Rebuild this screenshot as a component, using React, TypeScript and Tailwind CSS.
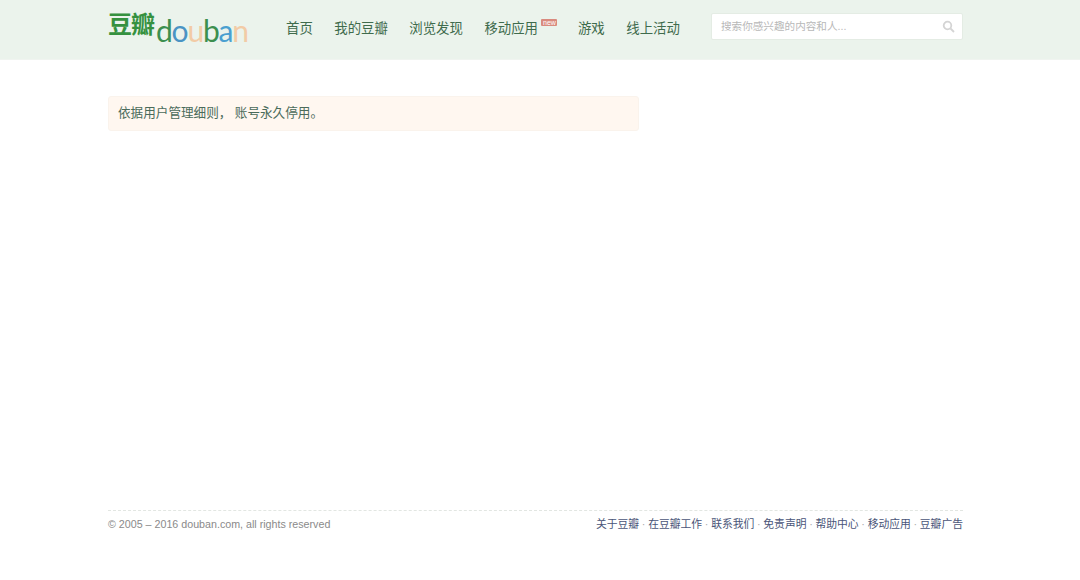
import React from "react";

const cjk = "font-['Liberation_Sans','Noto_Sans_CJK_SC',sans-serif]";

const navItems = ["首页", "我的豆瓣", "浏览发现", "移动应用", "游戏", "线上活动"];
const footerLinks = ["关于豆瓣", "在豆瓣工作", "联系我们", "免责声明", "帮助中心", "移动应用", "豆瓣广告"];

const App: React.FC = () => {
  return (
    <div className={`h-[580px] w-[1080px] overflow-hidden bg-white flex flex-col ${cjk}`}>
      <header className="h-[60px] shrink-0 bg-[#ebf3ec] border-b border-[#f0f4f0] flex pl-[108px] pr-[117px]">
        <div className="w-[178px] shrink-0 flex items-start relative">
          <span className="text-[24px] leading-[24px] font-bold text-[#35913f] mt-[13px] tracking-[-1px]">豆瓣</span>
          <span className="text-[30px] leading-[30px] mt-[15px] ml-[2px] font-['Lato',sans-serif] tracking-[-1.2px]">
            <span className="text-[#3c8f4f]">d</span>
            <span className="text-[#4a94c4]">o</span>
            <span className="text-[#f2cba6]">u</span>
            <span className="text-[#3c8f4f]">b</span>
            <span className="text-[#4a9fd0]">a</span>
            <span className="text-[#f2cba6]">n</span>
          </span>
        </div>
        <nav className="flex gap-[21.5px] h-[56px] items-center text-[13.4px] text-[#3f6b4c] w-[425px] shrink-0 mt-[1px]">
          {navItems.map((item) => (
            <span key={item} className={`relative whitespace-nowrap ${item === "移动应用" ? "mr-[18.5px]" : ""}`}>
              {item}
              {item === "移动应用" && (
                <span className="absolute left-[57px] top-[0px] h-[7px] w-[16px] bg-[#d98a7e] text-white text-[7px] leading-[7px] text-center rounded-[1px]">
                  new
                </span>
              )}
            </span>
          ))}
        </nav>
        <div className="w-[252px] h-[27px] mt-[13px] ml-auto bg-white border border-[#e4ece4] flex items-center justify-between pl-[9px] pr-[7px] rounded-[2px]">
          <span className="text-[10.6px] text-[#b8b8b8]">搜索你感兴趣的内容和人...</span>
          <svg width="13" height="13" viewBox="0 0 13 13" fill="none" stroke="#d4d4d4" strokeWidth="1.8">
            <circle cx="5.5" cy="5.5" r="3.8" />
            <path d="M8.5 8.5 L12 12" />
          </svg>
        </div>
      </header>

      <main className="flex-1 pl-[108px] pt-[36px]">
        <div className="w-[531px] h-[35px] bg-[#fff7f0] border border-[#faf3ec] rounded-[3px] pl-[9px] flex items-center text-[12.6px] text-[#4a6b5a]">
          依据用户管理细则， 账号永久停用。
        </div>
      </main>

      <footer className="ml-[108px] mr-[117px] h-[70px] shrink-0 border-t border-dashed border-[#e2e6e2] flex justify-between pt-[6px]">
        <span className="text-[10.7px] leading-[14px] text-[#8a8a8a] font-['Liberation_Sans',sans-serif]">
          © 2005 – 2016 douban.com, all rights reserved
        </span>
        <div className="flex text-[10.8px] leading-[14px] text-[#4a5578]">
          {footerLinks.map((link, i) => (
            <span key={link} className="whitespace-nowrap">
              {i > 0 && <span className="text-[#aaaaaa] mx-[2.7px]">·</span>}
              {link}
            </span>
          ))}
        </div>
      </footer>
    </div>
  );
};

export default App;
